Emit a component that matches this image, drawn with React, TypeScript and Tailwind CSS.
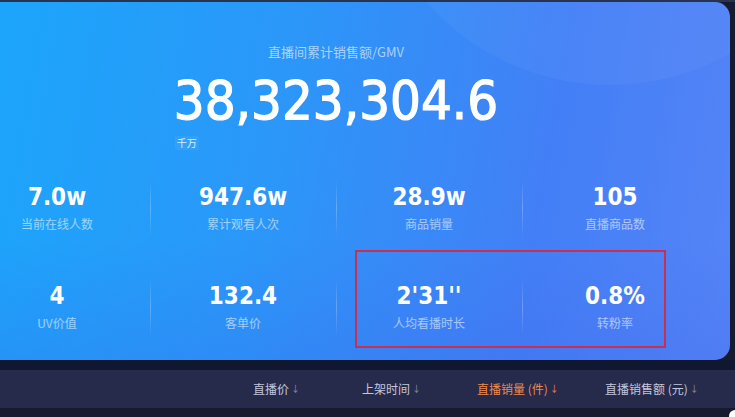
import React from "react";

const num = { fontFamily: '"DejaVu Sans Condensed", "DejaVu Sans", sans-serif', fontStretch: "condensed" } as React.CSSProperties;

const stats = [
  [
    { v: "7.0w", l: "当前在线人数" },
    { v: "947.6w", l: "累计观看人次" },
    { v: "28.9w", l: "商品销量" },
    { v: "105", l: "直播商品数" },
  ],
  [
    { v: "4", l: "UV价值" },
    { v: "132.4", l: "客单价" },
    { v: "2'31''", l: "人均看播时长" },
    { v: "0.8%", l: "转粉率" },
  ],
];

function Tab({ label, active, w }: { label: string; active?: boolean; w: string }) {
  return (
    <div className={`${w} flex items-center text-[12px] ${active ? "text-[#f08b4c]" : "text-[#c4c8dc]"}`}>
      <span>{label}</span>
      <span className={`ml-[2px] text-[9px] ${active ? "text-[#f08b4c]" : "text-[#8d92ac]"}`}>↓</span>
    </div>
  );
}

export default function App() {
  return (
    <div
      className="relative w-[735px] h-[417px] overflow-hidden bg-[#181b2f]"
      style={{ fontFamily: '"Noto Sans CJK SC", "Noto Sans", sans-serif' }}
    >
      <div className="h-[2px] bg-[#26344f]" />
      <div className="relative ml-[-58px] w-[788px] h-[358px] rounded-r-[15px] overflow-hidden bg-[linear-gradient(100deg,#19a8fb_0%,#2a98f9_40%,#437ff6_75%,#5684f6_100%)]">
        <div className="absolute left-[423px] top-[-407px] w-[490px] h-[490px] rounded-full bg-white/[0.04]" />
        <div className="absolute inset-x-0 bottom-0 h-[120px] bg-gradient-to-b from-transparent to-[#3a5de8]/20" />
        <div className="relative flex flex-col items-center pt-[42px]">
          <div className="text-[13px] leading-[16px] text-white/60">直播间累计销售额/GMV</div>
          <div className="mt-[14px] flex flex-col items-start">
            <div className="text-[54px] leading-[54px] text-white [-webkit-text-stroke:1.2px_white]" style={num}>
              38,323,304.6
            </div>
            <div className="mt-[8px] ml-[1px] px-[2px] text-[10px] leading-[14px] text-white/80 bg-white/[0.06] rounded-[2px]">千万</div>
          </div>
        </div>
        <div className="relative mt-[30px] px-[22px] flex flex-col gap-[42px]">
          {stats.map((row, ri) => (
            <div key={ri} className="grid grid-cols-4">
              {row.map((s, i) => (
                <div key={i} className="relative flex flex-col items-center pt-[5px] pb-[5px]">
                  {i > 0 && (
                    <div className="absolute left-0 top-0 bottom-0 w-px bg-gradient-to-b from-white/0 via-white/25 to-white/0" />
                  )}
                  <div className="text-[24px] leading-[24px] font-bold text-white" style={num}>
                    {s.v}
                  </div>
                  <div className="mt-[7px] text-[12px] leading-[16px] text-white/55">{s.l}</div>
                </div>
              ))}
            </div>
          ))}
        </div>
      </div>
      <div className="absolute left-[355px] top-[250px] w-[311px] h-[98px] border-2 border-[#c9304f]" />
      <div className="h-[10px] bg-[#101831]" />
      <div className="h-[38px] bg-[#262a4b] flex items-center pl-[253px]">
        <Tab w="w-[109px]" label="直播价" />
        <Tab w="w-[115px]" label="上架时间" />
        <Tab w="w-[128px]" label="直播销量 (件)" active />
        <Tab w="w-[110px]" label="直播销售额 (元)" />
      </div>
      <div className="absolute right-[-6px] bottom-[-5px] w-[12px] h-[12px] rounded-full bg-white" />
    </div>
  );
}
